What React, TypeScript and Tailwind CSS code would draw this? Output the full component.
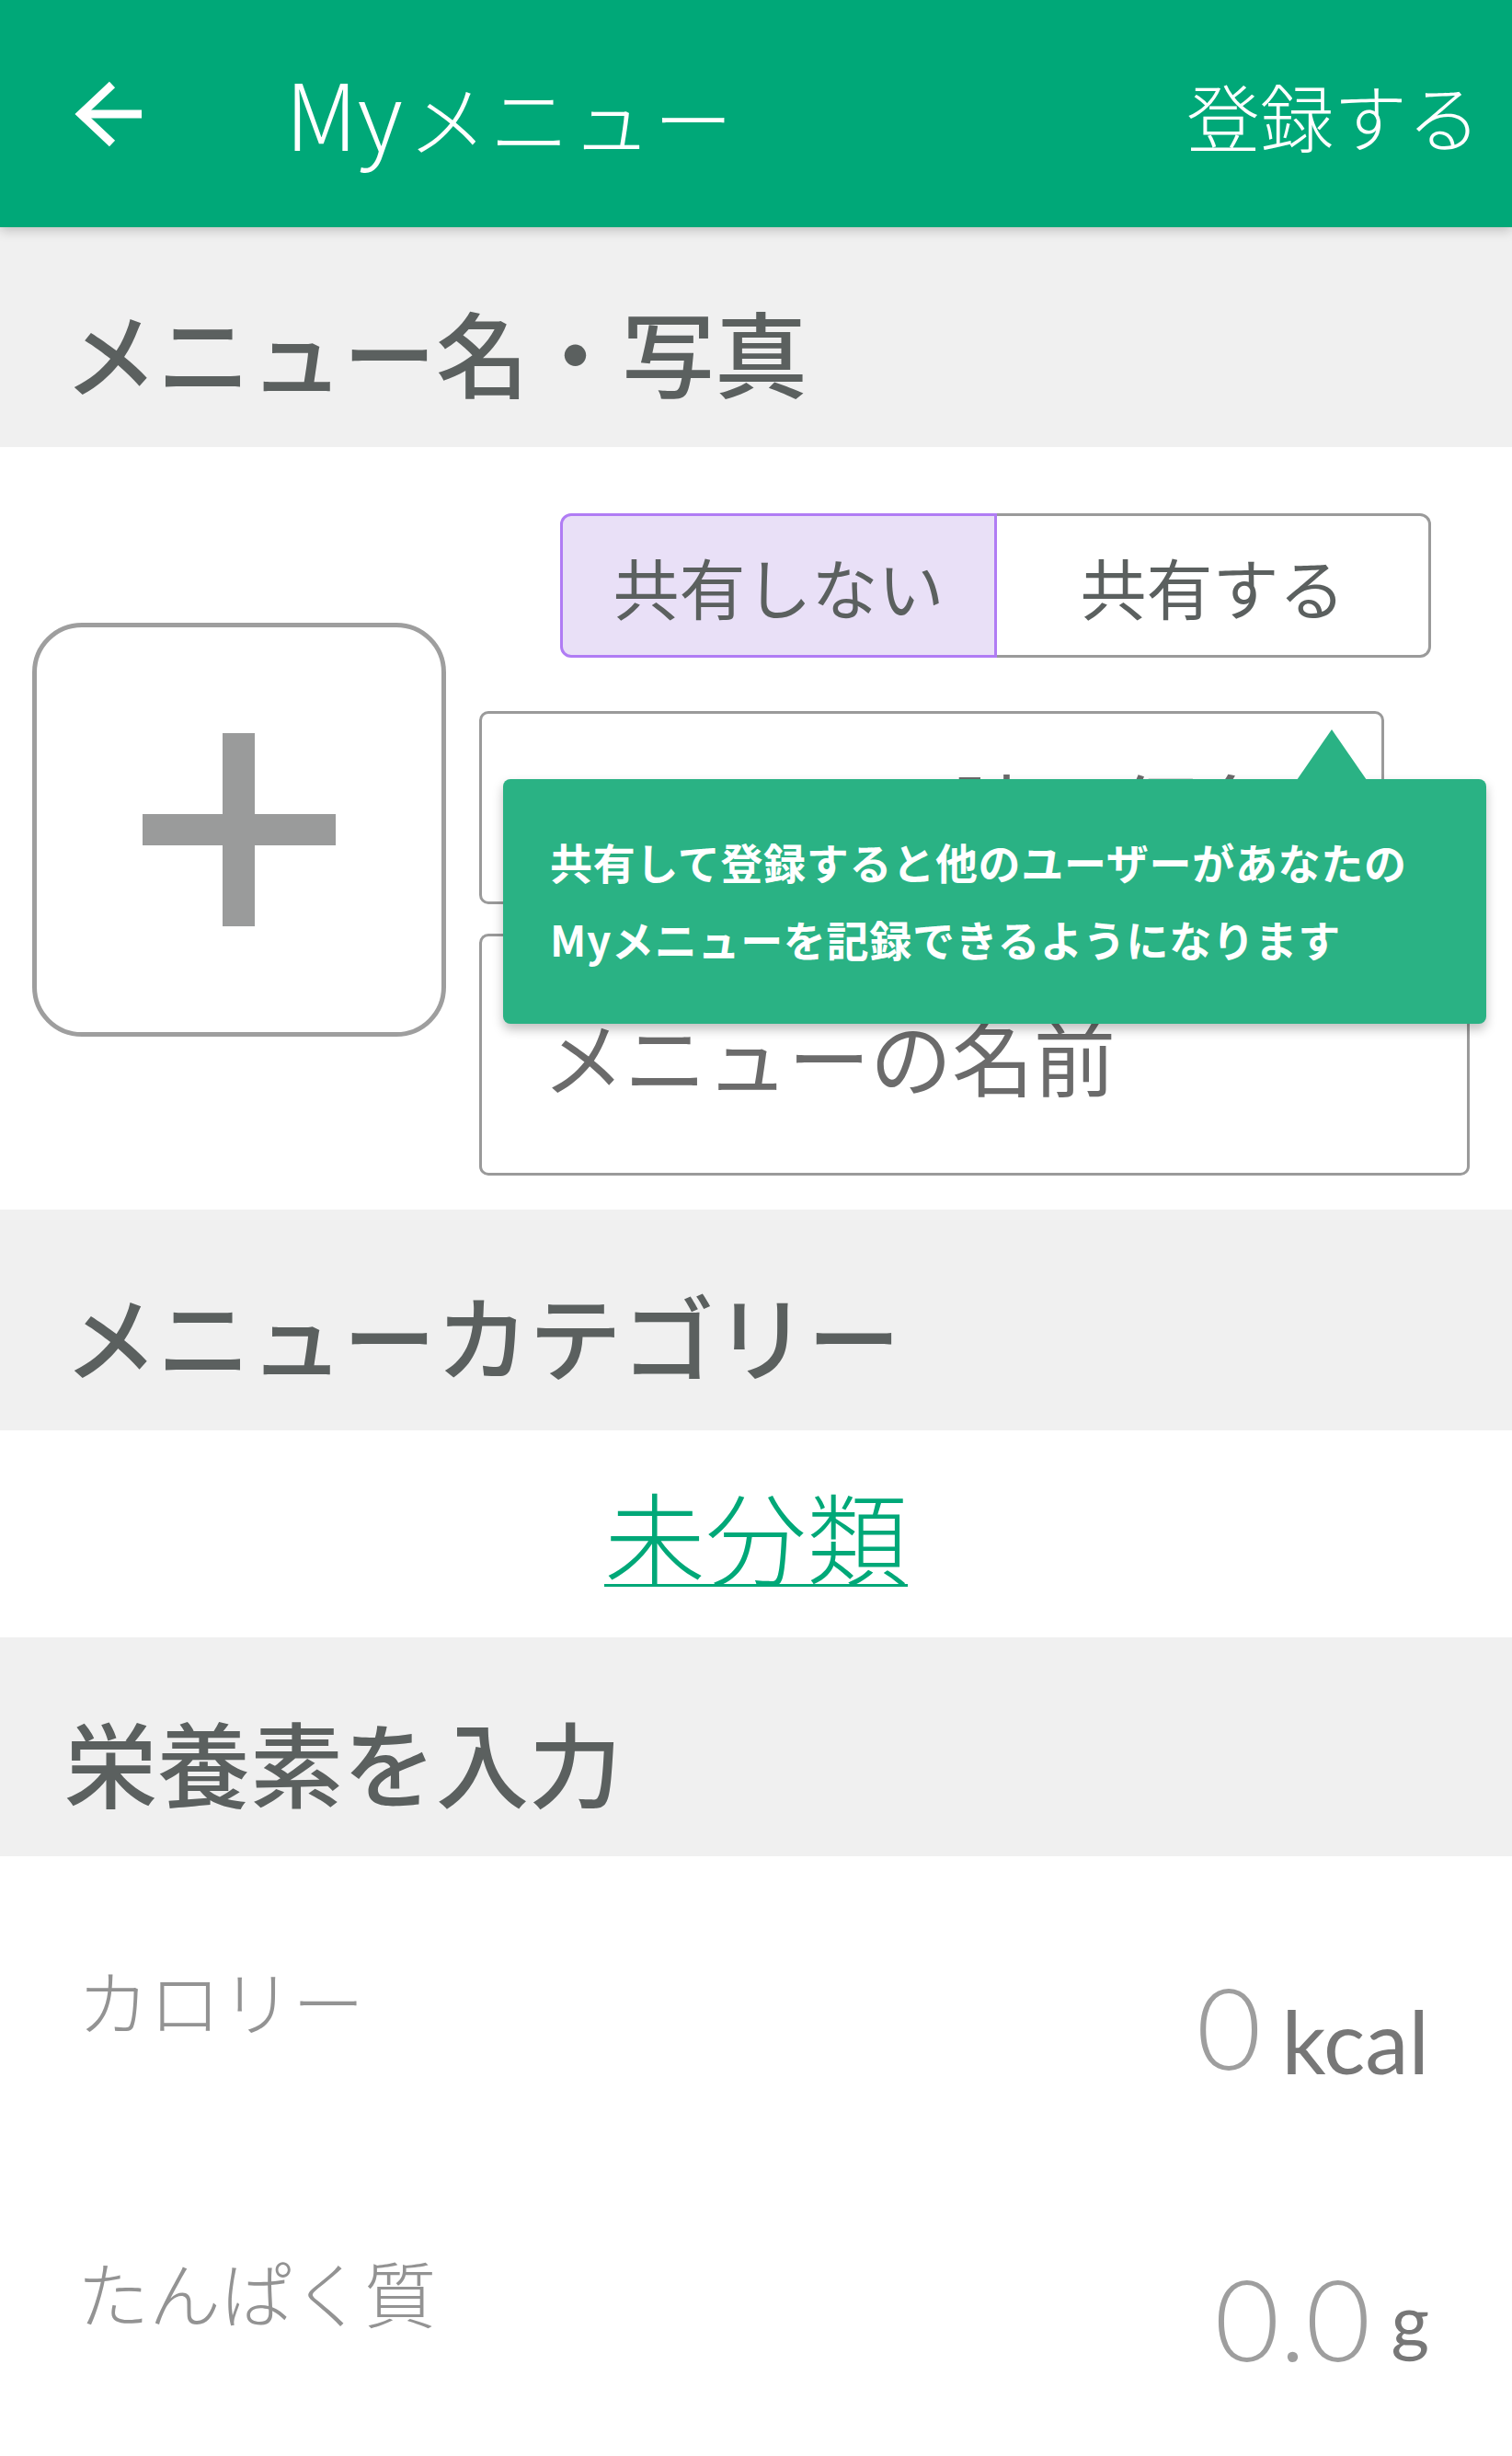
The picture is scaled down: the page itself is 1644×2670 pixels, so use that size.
import type { ReactNode } from "react";

function SectionHead({ children, h }: { children: ReactNode; h: string }) {
  return (
    <div className={`flex items-center bg-[#f0f0f0] pl-[70px] pt-[30px] ${h}`}>
      <h2 className="text-[101px] font-medium leading-none text-[#5b605f]">{children}</h2>
    </div>
  );
}

function NutrientRow({ label, value, unit, unitClass }: { label: string; value: string; unit: string; unitClass: string }) {
  return (
    <div className="flex h-[317px] items-start justify-between pl-[84px] pr-[90px]">
      <span className="mt-[117px] text-[78px] font-light leading-none text-[#939393]">{label}</span>
      <div className="mt-[124px] flex items-end font-['Lato',sans-serif]">
        <span className="text-[122px] font-light leading-none text-[#9e9e9e]">{value}</span>
        <span className={`ml-[22px] leading-none text-[#777] ${unitClass}`}>{unit}</span>
      </div>
    </div>
  );
}

export default function App() {
  return (
    <div className="min-h-[2670px] w-full bg-white font-['Noto_Sans_CJK_JP',sans-serif]">
      {/* App bar */}
      <header className="relative z-10 flex h-[247px] items-center bg-[#00a878] text-white shadow-[0_3px_12px_rgba(0,0,0,0.22)]">
        <svg className="ml-[80px] h-[72px] w-[78px]" viewBox="0 0 78 72" fill="none" stroke="white" strokeWidth="9">
          <path d="M74 36H8" />
          <path d="M42 4L8 36L42 68" strokeLinejoin="miter" />
        </svg>
        <h1 className="ml-[152px] -mt-[6px] flex items-baseline font-light leading-none">
          <span className="text-[100px]">My</span>
          <span className="ml-[6px] text-[86px] tracking-[3px]">メニュー</span>
        </h1>
        <span className="ml-auto mr-[34px] text-[80px] font-light leading-none">登録する</span>
      </header>

      <SectionHead h="h-[239px]">メニュー名・写真</SectionHead>

      {/* Name & photo */}
      <div className="relative flex h-[829px] items-start">
        <button className="ml-[35px] mt-[191px] flex h-[450px] w-[450px] items-center justify-center rounded-[54px] border-[5px] border-[#9e9e9e] bg-white">
          <svg className="h-[210px] w-[210px]" viewBox="0 0 210 210" fill="#9a9b9b">
            <rect x="87" y="0" width="35" height="210" />
            <rect x="0" y="88" width="210" height="34" />
          </svg>
        </button>

        <div className="ml-[36px] mt-[72px] flex flex-col">
          <div className="ml-[88px] flex h-[157px] w-[947px] text-[72px] leading-none text-[#5b605f]">
            <div className="flex w-[475px] items-center justify-center rounded-l-[12px] border-[3px] border-[#b07cf4] bg-[#e9e0f7]">
              共有しない
            </div>
            <div className="flex flex-1 items-center justify-center rounded-r-[12px] border-[3px] border-l-0 border-[#9a9a9a] bg-white">
              共有する
            </div>
          </div>

          <div className="mt-[58px] flex h-[210px] w-[984px] items-center rounded-[10px] border-[3px] border-[#9a9a9a] pl-[66px] text-[89px] leading-none text-[#6b6b6b]">
            メニューの読み仮名
          </div>

          <div className="mt-[32px] flex h-[263px] w-[1077px] items-center rounded-[10px] border-[3px] border-[#9a9a9a] pl-[66px] text-[89px] leading-none text-[#6b6b6b]">
            メニューの名前
          </div>
        </div>

        {/* Share tooltip */}
        <div className="absolute left-[547px] top-[361px] h-[266px] w-[1069px] rounded-[8px] bg-[#2ab284] pl-[51px] pt-[47px] shadow-[0_6px_12px_rgba(0,0,0,0.25)]">
          <svg className="absolute -top-[54px] left-[863px] h-[55px] w-[76px]" viewBox="0 0 76 55" fill="#2ab284">
            <path d="M38 0L76 55H0Z" />
          </svg>
          <p className="text-[46px] font-bold leading-[84px] tracking-[0.7px] text-white">
            共有して登録すると他のユーザーがあなたの
            <br />
            Myメニューを記録できるようになります
          </p>
        </div>
      </div>

      <SectionHead h="h-[240px]">メニューカテゴリー</SectionHead>

      <div className="flex h-[225px] items-center justify-center">
        <a className="text-[110px] font-light leading-none text-[#00a878] underline decoration-[3px] underline-offset-[6px]">未分類</a>
      </div>

      <SectionHead h="h-[238px]">栄養素を入力</SectionHead>

      <NutrientRow label="カロリー" value="0" unit="kcal" unitClass="text-[95px] mb-[-2px]" />
      <NutrientRow label="たんぱく質" value="0.0" unit="g" unitClass="text-[80px] mb-[20px]" />
    </div>
  );
}
